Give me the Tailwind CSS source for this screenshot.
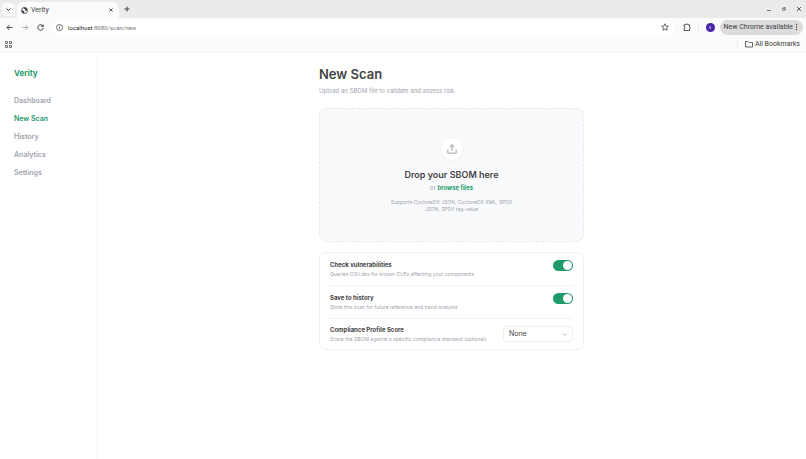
<!DOCTYPE html>
<html lang="en">
<head>
  <meta charset="UTF-8"/>
  <meta name="viewport" content="width=device-width, initial-scale=1.0"/>
  <title>Verity</title>
  <script src="https://cdn.jsdelivr.net/npm/@tailwindcss/browser@4"></script>
</head>
<body class="min-h-screen flex flex-col bg-white font-['Inter',sans-serif]">

<!-- Browser window -->
<header class="font-['Roboto',sans-serif] text-[7px] text-[#3c3c3c]">
  <div class="h-[18px] flex items-center bg-[#ebebeb] pl-[2px] pr-[5px]">
    <button aria-label="Search tabs" class="size-[13px] rounded bg-[#fafafa] flex items-center justify-center">
      <svg class="size-[5px]" viewBox="0 0 10 10" fill="none" stroke="#333" stroke-width="2"><path d="M1 3l4 4 4-4"/></svg>
    </button>
    <div class="w-[102px] h-4 mt-[2px] ml-[2px] pl-1 pr-[6px] flex items-center gap-[3px] rounded-t-md bg-[#fbfbfb]">
      <svg class="size-[7px]" viewBox="0 0 16 16"><circle cx="8" cy="8" r="7" fill="#fff" stroke="#444" stroke-width="1.8"/><path d="M1.5 7c3 0 3 2 5 2s2 2 1 3v3C4 15 1 12 1.500 7zM6 1.500c0 3 2 2 3 3.500s-1 2 1 3 3 1 4.500 0C15 4 11 0 6 1.500z" fill="#444"/></svg>
      <span class="flex-1">Verity</span>
      <button aria-label="Close tab"><svg class="size-[4px]" viewBox="0 0 10 10" fill="none" stroke="#333" stroke-width="2"><path d="M1 1l8 8M9 1l-8 8"/></svg></button>
    </div>
    <button aria-label="New tab" class="ml-[5px]"><svg class="size-[6px]" viewBox="0 0 12 12" fill="none" stroke="#444" stroke-width="2"><path d="M6 1v10M1 6h10"/></svg></button>
    <div class="ml-auto flex items-center gap-[11px]">
      <button aria-label="Minimize"><svg class="size-1" viewBox="0 0 8 8" stroke="#444" stroke-width="1.500"><path d="M0 7h8"/></svg></button>
      <button aria-label="Restore"><svg class="size-1" viewBox="0 0 8 8" fill="none" stroke="#555" stroke-width="1.200"><path d="M1 3h4v4H1zM3 3V1h4v4H5"/></svg></button>
      <button aria-label="Close"><svg class="size-1" viewBox="0 0 8 8" stroke="#333" stroke-width="1.500"><path d="M0 0l8 8M8 0L0 8"/></svg></button>
    </div>
  </div>
  <div class="h-[18px] flex items-center bg-[#fbfbfb] pl-[6px] pr-[3px]">
    <button aria-label="Back"><svg class="size-[7px]" viewBox="0 0 14 14" fill="none" stroke="#333" stroke-width="1.800"><path d="M13 7H2M7 2L2 7l5 5"/></svg></button>
    <button aria-label="Forward" class="ml-[9px]"><svg class="size-[7px]" viewBox="0 0 14 14" fill="none" stroke="#aaa" stroke-width="1.800"><path d="M1 7h11M7 2l5 5-5 5"/></svg></button>
    <button aria-label="Reload" class="ml-[8px]"><svg class="size-[7px]" viewBox="0 0 14 14" fill="none" stroke="#333" stroke-width="1.800"><path d="M12 4.500A5.500 5.500 0 1 0 12.500 8M12.500 1v4h-4"/></svg></button>
    <div class="flex-1 h-[15px] ml-2 pl-1 pr-[6px] flex items-center gap-[5px] rounded-full bg-white">
      <svg class="size-[7px]" viewBox="0 0 14 14" fill="none" stroke="#444" stroke-width="1.500"><circle cx="7" cy="7" r="6"/><path d="M7 6v4M7 3.500v1.500"/></svg>
      <input aria-label="Address" class="sr-only" value="localhost:8080/scan/new">
      <span class="flex-1 text-[6px] text-[#777]"><span class="text-[#222]">localhost</span>:8080/scan/new</span>
      <button aria-label="Bookmark this tab"><svg class="size-[8px]" viewBox="0 0 16 16" fill="none" stroke="#444" stroke-width="1.600"><path d="M8 1.500l2 4.500 4.800.5-3.600 3.200 1 4.800L8 12l-4.200 2.500 1-4.800L1.200 6.500 6 6z"/></svg></button>
    </div>
    <button aria-label="Extensions" class="ml-2"><svg class="size-[8px]" viewBox="0 0 16 16" fill="none" stroke="#444" stroke-width="1.800"><path d="M2 3.500h4a1.800 1.800 0 0 1 3.600 0H13v4a1.800 1.800 0 0 1 0 3.600V15H2v-3.600a2 2 0 0 0 0-4z"/></svg></button>
    <span class="w-px h-2 ml-[7px] bg-[#ececec]"></span>
    <button class="size-[9px] ml-[7px] rounded-full bg-[#4a22a8] text-[#c9bdf0] text-[5px] leading-none">s</button>
    <button class="h-[15px] ml-[5px] pl-1 pr-[5px] flex items-center gap-[2px] rounded-full bg-[#dcdcdc] whitespace-nowrap">New Chrome available
      <svg class="w-[3px] h-[8px]" viewBox="0 0 3 8" fill="#333"><circle cx="1.500" cy="1.500" r=".7"/><circle cx="1.500" cy="4" r=".7"/><circle cx="1.500" cy="6.500" r=".7"/></svg>
    </button>
  </div>
  <div class="h-4 flex items-center bg-[#fbfbfb] pl-[5px] pr-[6px]">
    <button aria-label="Apps"><svg class="size-[7px]" viewBox="0 0 14 14" fill="none" stroke="#666" stroke-width="1.800"><path d="M1 1h4v4H1zM9 1h4v4H9zM1 9h4v4H1zM9 9h4v4H9z"/></svg></button>
    <span class="w-px h-2 ml-auto mr-[7px] bg-[#ececec]"></span>
    <button class="flex items-center gap-[2px]">
      <svg class="size-[8px]" viewBox="0 0 16 16" fill="none" stroke="#444" stroke-width="1.600"><path d="M1 3h5l2 2h7v9H1z"/></svg>
      All Bookmarks
    </button>
  </div>
</header>

<div class="flex-1 flex border-t border-[#f3f3f3]">
  <aside class="w-[97px] shrink-0 border-r border-[#f7f8f9] pl-[14px] pt-[14px]">
    <a href="#" class="block text-[8px] leading-3 font-bold text-[#1f9a68]">Verity</a>
    <nav class="mt-4 flex flex-col gap-[6px] text-[7px] leading-3 font-semibold text-[#a0a4af]">
      <a href="#">Dashboard</a>
      <a href="#" class="text-[#1f9a68]">New Scan</a>
      <a href="#">History</a>
      <a href="#">Analytics</a>
      <a href="#">Settings</a>
    </nav>
  </aside>

  <main class="flex-1 pt-[13px]">
    <div class="w-[265px] mx-auto">
      <h1 class="text-[13px] leading-4 font-semibold text-[#444]">New Scan</h1>
      <p class="mt-1 text-[6px] leading-[10px] text-[#a0a4af]">Upload an SBOM file to validate and assess risk.</p>

      <section class="mt-3 py-7 flex flex-col items-center rounded-lg border border-dashed border-[#e6e9ee] bg-[#f9fafc] text-center">
        <div class="size-6 flex items-center justify-center rounded-full border border-[#f0f1f3] bg-white">
          <svg class="size-[10px]" viewBox="0 0 24 24" fill="none" stroke="#8b8f98" stroke-width="2" stroke-linecap="round" stroke-linejoin="round"><path d="M2 15v7h20v-7M12 16V2M7 7l5-5 5 5"/></svg>
        </div>
        <h2 class="mt-2 text-[9px] leading-3 font-semibold text-[#444]">Drop your SBOM here</h2>
        <p class="mt-[2px] text-[6px] leading-[10px] text-[#a0a4af]">or <button class="font-bold text-[#1f9a68]">browse files</button></p>
        <p class="mt-[6px] w-[134px] text-[5px] leading-[7px] text-[#a0a4af]">Supports CycloneDX JSON, CycloneDX XML, SPDX JSON, SPDX tag-value</p>
      </section>

      <section class="mt-[10px] px-[10px] rounded-md border border-[#f1f2f4]">
        <div class="pt-[7px] pb-[7px] flex items-start justify-between border-b border-[#f1f2f4]">
          <label for="vulns">
            <span class="block text-[6px] leading-[10px] font-bold text-[#444]">Check vulnerabilities</span>
            <span class="block text-[5px] leading-2 text-[#a0a4af]">Queries OSV.dev for known CVEs affecting your components</span>
          </label>
          <input id="vulns" type="checkbox" checked class="appearance-none w-5 h-[11px] rounded-full bg-gray-200 checked:bg-[#1f9a68] flex items-center justify-end p-px before:size-[9px] before:rounded-full before:bg-white">
        </div>
        <div class="pt-[7px] pb-[7px] flex items-start justify-between border-b border-[#f1f2f4]">
          <label for="history">
            <span class="block text-[6px] leading-[10px] font-bold text-[#444]">Save to history</span>
            <span class="block text-[5px] leading-2 text-[#a0a4af]">Store this scan for future reference and trend analysis</span>
          </label>
          <input id="history" type="checkbox" checked class="appearance-none w-5 h-[11px] rounded-full bg-gray-200 checked:bg-[#1f9a68] flex items-center justify-end p-px before:size-[9px] before:rounded-full before:bg-white">
        </div>
        <div class="pt-[6px] pb-[6px] flex items-center justify-between whitespace-nowrap">
          <label for="profile">
            <span class="block text-[6px] leading-[10px] font-bold text-[#444]">Compliance Profile Score</span>
            <span class="block text-[5px] leading-2 text-[#a0a4af]">Score the SBOM against a specific compliance standard (optional)</span>
          </label>
          <div class="relative">
            <select id="profile" class="block appearance-none w-[70px] h-4 pl-[5px] rounded border border-[#eceef0] bg-white text-[7px] leading-3 text-[#444]">
              <option>None</option>
            </select>
            <svg class="absolute right-[6px] top-[6px] size-[5px] pointer-events-none" viewBox="0 0 10 10" fill="none" stroke="#a0a4af" stroke-width="1.500"><path d="M1 3l4 4 4-4"/></svg>
          </div>
        </div>
      </section>
    </div>
  </main>
</div>

</body>
</html>
